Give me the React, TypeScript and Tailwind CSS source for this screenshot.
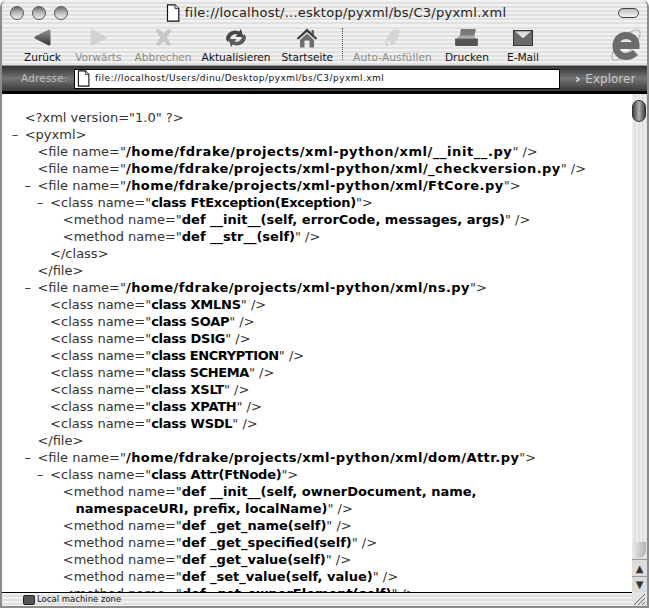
import type { ReactNode } from 'react'

type Row = { indent: number; dash?: boolean; tag: string; name?: string; end?: string; track?: string }

const path = 'tracking-[0.45px]'
const cls = 'tracking-[-0.25px]'

const rows: Row[] = [
  { indent: 1, tag: '<?xml version="1.0" ?>' },
  { indent: 1, dash: true, tag: '<pyxml>' },
  { indent: 2, tag: '<file name="', name: '/home/fdrake/projects/xml-python/xml/__init__.py', end: '" />', track: 'tracking-[0.58px]' },
  { indent: 2, tag: '<file name="', name: '/home/fdrake/projects/xml-python/xml/_checkversion.py', end: '" />', track: path },
  { indent: 2, dash: true, tag: '<file name="', name: '/home/fdrake/projects/xml-python/xml/FtCore.py', end: '">', track: path },
  { indent: 3, dash: true, tag: '<class name="', name: 'class FtException(Exception)', end: '">', track: cls },
  { indent: 4, tag: '<method name="', name: 'def __init__(self, errorCode, messages, args)', end: '" />' },
  { indent: 4, tag: '<method name="', name: 'def __str__(self)', end: '" />' },
  { indent: 3, tag: '</class>' },
  { indent: 2, tag: '</file>' },
  { indent: 2, dash: true, tag: '<file name="', name: '/home/fdrake/projects/xml-python/xml/ns.py', end: '">', track: path },
  { indent: 3, tag: '<class name="', name: 'class XMLNS', end: '" />', track: cls },
  { indent: 3, tag: '<class name="', name: 'class SOAP', end: '" />', track: cls },
  { indent: 3, tag: '<class name="', name: 'class DSIG', end: '" />', track: cls },
  { indent: 3, tag: '<class name="', name: 'class ENCRYPTION', end: '" />', track: 'tracking-[-0.4px]' },
  { indent: 3, tag: '<class name="', name: 'class SCHEMA', end: '" />', track: 'tracking-[-0.4px]' },
  { indent: 3, tag: '<class name="', name: 'class XSLT', end: '" />', track: cls },
  { indent: 3, tag: '<class name="', name: 'class XPATH', end: '" />', track: cls },
  { indent: 3, tag: '<class name="', name: 'class WSDL', end: '" />', track: cls },
  { indent: 2, tag: '</file>' },
  { indent: 2, dash: true, tag: '<file name="', name: '/home/fdrake/projects/xml-python/xml/dom/Attr.py', end: '">', track: path },
  { indent: 3, dash: true, tag: '<class name="', name: 'class Attr(FtNode)', end: '">', track: cls },
  { indent: 4, tag: '<method name="', name: 'def __init__(self, ownerDocument, name,' },
  { indent: 5, tag: '', name: 'namespaceURI, prefix, localName)', end: '" />' },
  { indent: 4, tag: '<method name="', name: 'def _get_name(self)', end: '" />' },
  { indent: 4, tag: '<method name="', name: 'def _get_specified(self)', end: '" />' },
  { indent: 4, tag: '<method name="', name: 'def _get_value(self)', end: '" />' },
  { indent: 4, tag: '<method name="', name: 'def _set_value(self, value)', end: '" />' },
  { indent: 4, tag: '<method name="', name: 'def _get_ownerElement(self)', end: '" />' },
]

const stripes = 'bg-[repeating-linear-gradient(180deg,#f1f1f1_0px,#f1f1f1_2px,#e0e0e0_2px,#e0e0e0_4px)]'

function ToolButton({ label, disabled, className, children }: { label: string; disabled?: boolean; className: string; children: ReactNode }) {
  return (
    <div className={`flex flex-col items-center ${className} ${disabled ? 'text-[#8c8c8c]' : 'text-[#111]'}`}>
      <div className="h-[25px] flex items-center justify-center">{children}</div>
      <span className="text-[10.6px] leading-[14px] whitespace-nowrap">{label}</span>
    </div>
  )
}

function PageIcon({ className }: { className: string }) {
  return (
    <svg viewBox="0 0 14 18" className={className}>
      <path d="M1.5 .8H9L12.8 4.6V17.2H1.5Z" fill="#fff" stroke="#111" strokeWidth="1.2" />
      <path d="M9 .8V4.6H12.8" fill="#ddd" stroke="#111" strokeWidth=".8" />
    </svg>
  )
}

function Light() {
  return <div className="w-[14px] h-[14px] rounded-full border border-[#555] bg-gradient-to-b from-[#6f6f6f] via-[#bdbdbd] to-[#eee]" />
}

export default function App() {
  return (
    <div className="w-[649px] h-[608px] bg-white overflow-hidden font-['DejaVu_Sans',sans-serif] flex flex-col border-x-2 border-b-2 border-[#8c8c8c] rounded-t-[7px]">
      <div className={`h-[25px] shrink-0 flex items-center ${stripes}`}>
        <div className="flex gap-[8px] ml-[8px]">
          <Light />
          <Light />
          <Light />
        </div>
        <div className="flex-1 flex items-center justify-center gap-[5px] text-[13px] text-[#222] tracking-[0.25px] pr-[14px] pt-[1px]">
          <PageIcon className="w-[14px] h-[18px]" />
          <span>file://localhost/...esktop/pyxml/bs/C3/pyxml.xml</span>
        </div>
        <div className="w-[21px] h-[10px] mr-[8px] rounded-full border border-[#444] bg-gradient-to-b from-[#bbb] to-[#f4f4f4]" />
      </div>

      <div className={`h-[41px] shrink-0 flex items-start pl-[22px] relative border-b border-[#999] ${stripes}`}>
        <ToolButton label="Zurück" className="">
          <svg viewBox="0 0 18 17" className="w-[18px] h-[17px]">
            <defs>
              <linearGradient id="back" x1="0" y1="0" x2="0" y2="1">
                <stop offset="0" stopColor="#8a8a8a" />
                <stop offset="1" stopColor="#3c3c3c" />
              </linearGradient>
            </defs>
            <path d="M2 8.5 15 2V15Z" fill="url(#back)" stroke="url(#back)" strokeWidth="3" strokeLinejoin="round" />
          </svg>
        </ToolButton>
        <ToolButton label="Vorwärts" disabled className="ml-[14px]">
          <svg viewBox="0 0 18 17" className="w-[18px] h-[17px]">
            <path d="M16 8.5 3 2V15Z" fill="#d2d2d2" stroke="#d2d2d2" strokeWidth="3" strokeLinejoin="round" />
          </svg>
        </ToolButton>
        <ToolButton label="Abbrechen" disabled className="ml-[13px]">
          <svg viewBox="0 0 20 18" className="w-[19px] h-[17px]">
            <path d="M2 1H6L10 5.5 14 1H18L13 9 18 17H14L10 12.5 6 17H2L7 9Z" fill="#c8c8c8" stroke="#c8c8c8" strokeLinejoin="round" />
          </svg>
        </ToolButton>
        <ToolButton label="Aktualisieren" className="ml-[10px]">
          <svg viewBox="0 0 24 20" className="w-[24px] h-[20px]">
            <path d="M2 11C2 5 9 .5 15 3.5L17 1 19.5 9 11.5 9 13.5 6.5C10 5.5 6.5 7 6 11.5L3.5 14Z" fill="#484848" />
            <path d="M22 9C22 15 15 19.5 9 16.5L7 19 4.5 11 12.5 11 10.5 13.5C14 14.5 17.5 13 18 8.5L20.5 6Z" fill="#5a5a5a" />
          </svg>
        </ToolButton>
        <ToolButton label="Startseite" className="ml-[11px]">
          <svg viewBox="0 0 22 20" className="w-[22px] h-[20px]">
            <path d="M15.5 2H18V7H15.5Z" fill="#666" />
            <path d="M11 .5 21.5 10.5 19.5 11.5 11 4 2.5 11.5 .5 10.5Z" fill="#3f3f3f" />
            <path d="M4 12 11 5.5 18 12V19.5H13.5V12.5H8.5V19.5H4Z" fill="#6e6e6e" />
          </svg>
        </ToolButton>
        <div className="w-0 h-[32px] ml-[9px] mt-[3px] border-l border-dotted border-[#555]" />
        <ToolButton label="Auto-Ausfüllen" disabled className="ml-[10px] tracking-[0.1px]">
          <svg viewBox="0 0 20 20" className="w-[19px] h-[20px]">
            <path d="M9 2Q14 0 18 2L17 8 11 17 3 19 2 13Z" fill="#d4d4d4" />
            <path d="M3 12 9 14 6 18Z" fill="#e8e8e8" />
          </svg>
        </ToolButton>
        <ToolButton label="Drucken" className="ml-[13px]">
          <svg viewBox="0 0 26 20" className="w-[25px] h-[19px]">
            <path d="M7 1H23L21 9H6Z" fill="#7a7a7a" />
            <path d="M5 8H21L23 11H3Z" fill="#aaa" />
            <path d="M1 11H25V18Q25 19 24 19H2Q1 19 1 18Z" fill="#555" />
          </svg>
        </ToolButton>
        <ToolButton label="E-Mail" className="ml-[18px]">
          <svg viewBox="0 0 20 16" className="w-[20px] h-[16px]">
            <rect x=".5" y=".5" width="19" height="15" fill="#6a6a6a" stroke="#333" />
            <path d="M1 1 10 9 19 1Z" fill="#ddd" stroke="#333" strokeWidth=".6" />
          </svg>
        </ToolButton>
        <svg viewBox="0 0 34 34" className="absolute right-[4px] top-[3px] w-[34px] h-[34px]">
          <ellipse cx="17" cy="17" rx="19.5" ry="7" transform="rotate(-48 17 17)" fill="none" stroke="#b4b4b4" strokeWidth="1.2" />
          <path d="M8 17.5H27C27 11 22.5 7.5 17 7.5 11 7.5 7 12 7 18 7 24.5 11.5 28.5 17 28.5 21 28.5 24 27 26.5 24.5" fill="none" stroke="#6c6c6c" strokeWidth="7" />
        </svg>
      </div>

      <div className="h-[25px] shrink-0 flex items-center bg-gradient-to-b from-[#333] via-[#757575] to-[#3a3a3a]">
        <span className="ml-[19px] w-[53px] text-[10.3px] text-[#bdbdbd] tracking-[0.3px]">Adresse:</span>
        <div className="w-[486px] h-[20px] bg-white border border-black flex items-center">
          <PageIcon className="w-[13px] h-[17px] ml-[2px]" />
          <span className="ml-[5px] text-[9px] tracking-[0.45px] text-[#111]">file://localhost/Users/dinu/Desktop/pyxml/bs/C3/pyxml.xml</span>
        </div>
        <span className="ml-[15px] text-[13px] leading-none font-bold text-[#e0e0e0]">›</span>
        <span className="ml-[5px] text-[12px] text-[#c8c8c8]">Explorer</span>
      </div>
      <div className="h-[3px] shrink-0 bg-black" />

      <div className="flex-1 min-h-0 flex">
        <div className="flex-1 min-w-0 overflow-hidden pt-[15px] text-[13px] leading-[17px] text-[#333]">
          {rows.map((r, i) => (
            <div key={i} className="relative whitespace-nowrap" style={{ paddingLeft: r.indent * 12.7 + 10 }}>
              {r.dash && <span className="absolute" style={{ left: r.indent * 12.7 - 3 }}>–</span>}
              {r.tag}
              {r.name && <span className={`font-bold text-black ${r.track ?? ''}`}>{r.name}</span>}
              {r.end}
            </div>
          ))}
        </div>
        <div className="w-[15px] shrink-0 flex flex-col bg-[#dcdcdc]">
          <div className="flex-1 flex flex-col bg-[repeating-linear-gradient(90deg,#ececec_0px,#ececec_2px,#e0e0e0_2px,#e0e0e0_4px)]">
            <div className="h-[6px]" />
            <div className="h-[22px] w-[14px] rounded-full bg-gradient-to-r from-[#444] via-[#b0b0b0] to-[#444] border border-[#333]" />
            <div className="flex-1" />
            <div className="h-[16px] w-[14px] rounded-b-full bg-gradient-to-r from-[#e8e8e8] to-[#b4b4b4]" />
          </div>
          <div className="h-[17px] flex items-center justify-center text-[10px] text-[#333] border-t border-[#999] mt-[1px]">▲</div>
          <div className="h-[16px] flex items-center justify-center text-[10px] text-[#333] border-t border-[#999]">▼</div>
        </div>
      </div>

      <div className="h-[14px] shrink-0 flex">
        <div className={`flex-1 flex items-center border-t border-black ${stripes}`}>
          <div className="w-[12px] h-[10px] ml-[21px] rounded-[2px] bg-[#555] border border-[#222]" />
          <span className="ml-[2px] text-[8.5px] text-[#111]">Local machine zone</span>
        </div>
        <svg viewBox="0 0 15 14" className="w-[15px] h-[14px] bg-[#e4e4e4]">
          <path d="M2 13 13 2M6 13 13 6M10 13 13 10" stroke="#666" strokeWidth="1" />
        </svg>
      </div>
    </div>
  )
}
